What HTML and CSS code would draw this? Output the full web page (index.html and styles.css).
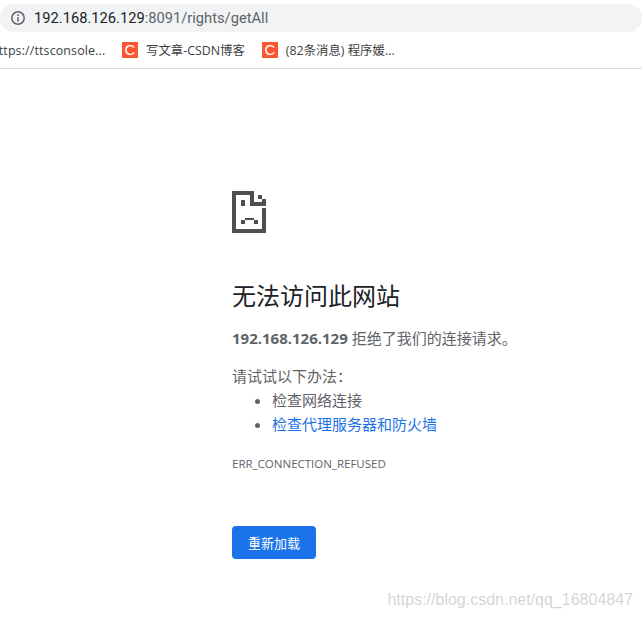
FILE: index.html
```html
<!DOCTYPE html>
<html lang="zh-CN">
<head>
  <meta charset="utf-8">
  <title>192.168.126.129</title>
  <link rel="stylesheet" href="styles.css">
</head>
<body>
  <div class="toolbar">
    <div class="omnibox">
      <svg class="info-icon" width="14" height="14" viewBox="0 0 14 14">
        <circle cx="7" cy="7" r="6.2" fill="none" stroke="#5f6368" stroke-width="1.5"/>
        <rect x="6.2" y="6.2" width="1.6" height="4.3" fill="#5f6368"/>
        <rect x="6.2" y="3.4" width="1.6" height="1.6" fill="#5f6368"/>
      </svg>
      <span class="host">192.168.126.129</span><span class="path">:8091/rights/getAll</span>
    </div>
  </div>

  <div class="bookmarks">
    <span class="bookmark first">https://ttsconsole...</span>
    <span class="bookmark"><span class="favicon">C</span>写文章-CSDN博客</span>
    <span class="bookmark"><span class="favicon">C</span>(82条消息) 程序媛...</span>
  </div>

  <div class="content">
    <svg class="sad-page" width="34" height="42" viewBox="0 0 34 42" shape-rendering="crispEdges">
      <path fill="#4f4f4f" d="M0 0h22v4H4v34h26V17h4v25H0z"/>
      <path fill="#4f4f4f" d="M18 0h4v11h12v4H18z"/>
      <path fill="#4f4f4f" d="M26 4h4v4h-4zM30 8h4v4h-4z"/>
      <path fill="#4f4f4f" d="M9 9h4v6H9z"/>
      <path fill="#4f4f4f" d="M13 27h9v2H13zM9 29h4v4H9zM22 29h4v4h-4z"/>
    </svg>

    <h1>无法访问此网站</h1>
    <p class="summary"><strong>192.168.126.129</strong> 拒绝了我们的连接请求。</p>

    <div class="suggestions">
      <p>请试试以下办法：</p>
      <ul>
        <li>检查网络连接</li>
        <li><a href="#">检查代理服务器和防火墙</a></li>
      </ul>
    </div>

    <div class="error-code">ERR_CONNECTION_REFUSED</div>

    <button class="reload">重新加载</button>
  </div>

  <div class="watermark">https://blog.csdn.net/qq_16804847</div>
</body>
</html>
```

FILE: styles.css
```css
* {
  margin: 0;
  padding: 0;
  box-sizing: border-box;
}

html, body {
  height: 617px;
  overflow: hidden;
}

body {
  position: relative;
  background: #fff;
  font-family: "Open Sans", "Noto Sans CJK SC", sans-serif;
  color: #5f6368;
}

.toolbar {
  height: 37px;
  padding-top: 4px;
}

.omnibox {
  height: 28px;
  background: #f1f3f4;
  border-radius: 14px;
  display: flex;
  align-items: center;
  padding-left: 11px;
  font-family: "Roboto", sans-serif;
  font-size: 14.7px;
  color: #5f6368;
}

.info-icon {
  margin-right: 9px;
}

.host {
  color: #202124;
}

.bookmarks {
  height: 32px;
  border-bottom: 1px solid #dadce0;
  display: flex;
  align-items: flex-start;
  padding-top: 5px;
  font-size: 12.4px;
  color: #3c4043;
  white-space: nowrap;
}

.bookmark {
  display: flex;
  align-items: center;
  height: 16px;
  margin-right: 17px;
}

.bookmark.first {
  margin-left: -9px;
  width: 123px;
  margin-right: 8px;
  letter-spacing: 0.15px;
}

.favicon {
  width: 16px;
  height: 16px;
  margin-right: 8px;
  background: #fc5531;
  color: #fff;
  font-family: "Liberation Sans", sans-serif;
  font-size: 15px;
  line-height: 16px;
  text-align: center;
}

.content {
  padding: 122px 0 0 232px;
}

.sad-page {
  display: block;
}

h1 {
  margin-top: 47px;
  font-size: 24px;
  font-weight: 400;
  line-height: 32px;
  color: #202124;
}

.summary {
  margin-top: 14px;
  font-size: 15px;
  line-height: 24px;
}

.suggestions {
  margin-top: 14px;
  font-size: 15px;
  line-height: 24px;
}

.suggestions ul {
  padding-left: 40px;
}

.suggestions a {
  color: #1a73e8;
  text-decoration: none;
}

.error-code {
  margin-top: 20px;
  font-size: 11.5px;
  line-height: 16px;
}

.reload {
  display: block;
  margin-top: 54px;
  width: 84px;
  height: 33px;
  background: #1a73e8;
  border: 0;
  border-radius: 4px;
  color: #fff;
  font-family: inherit;
  font-size: 13px;
}

.watermark {
  position: absolute;
  right: 9px;
  bottom: 8px;
  font-family: "Liberation Sans", sans-serif;
  font-size: 16px;
  color: rgba(130, 130, 130, 0.35);
}
```
